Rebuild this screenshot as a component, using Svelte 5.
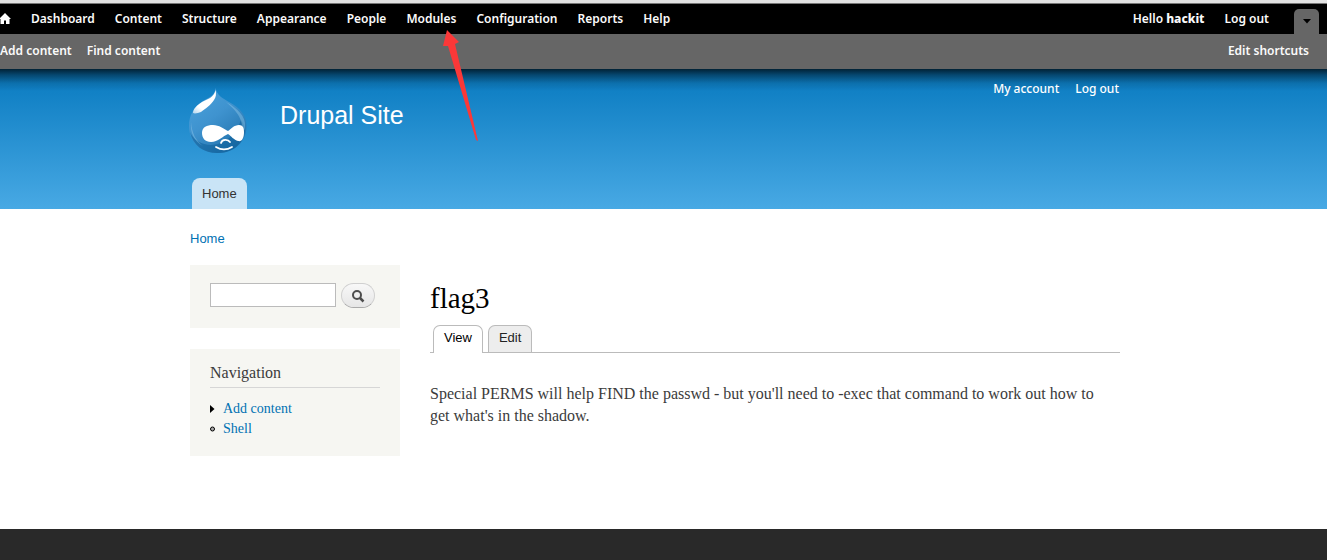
<script>
  const adminLinks = ['Dashboard', 'Content', 'Structure', 'Appearance', 'People', 'Modules', 'Configuration', 'Reports', 'Help'];
</script>

<div class="page">
  <div class="toolbar">
    <nav class="menu" aria-label="Administration">
      <a class="home" href="#home" aria-label="Home">
        <svg width="11" height="11" viewBox="0 0 11 11"><path d="M5 0 L11 6 H9.500 V11 H6 V7.500 H4 V11 H.5 V6 H-1 Z" fill="#fff" /></svg>
      </a>
      {#each adminLinks as label}
        <a href="#{label}">{label}</a>
      {/each}
      <div class="user">
        <a href="#user">Hello <strong>hackit</strong></a>
        <a href="#logout">Log out</a>
        <button class="toggle" type="button" aria-label="Hide shortcuts">
          <svg width="8" height="5" viewBox="0 0 8 5"><path d="M0 0 H8 L4 4.500 Z" fill="#000" /></svg>
        </button>
      </div>
    </nav>
    <nav class="drawer" aria-label="Shortcuts">
      <a href="#add">Add content</a>
      <a href="#find">Find content</a>
      <a class="edit" href="#shortcuts">Edit shortcuts</a>
    </nav>
    <svg class="pointer" width="38" height="112" viewBox="0 0 38 112" aria-hidden="true">
      <path d="M7 0 L19 12 L15 14 L38 111 L36 110 L8 16 L3 16 Z" fill="#fb3838" />
    </svg>
  </div>

  <header>
    <div class="wrap">
      <div class="brand">
        <a class="logo" href="#home" aria-label="Drupal Site home">
          <svg width="58" height="66" viewBox="0 0 58 66">
            <defs>
              <linearGradient id="drop" x1="0" y1="0" x2=".7" y2="1">
                <stop offset="0" stop-color="#4ba3dd" />
                <stop offset=".5" stop-color="#3f93cf" />
                <stop offset="1" stop-color="#2273ad" />
              </linearGradient>
              <linearGradient id="shine" x1="0" y1="1" x2=".7" y2="0">
                <stop offset="0" stop-color="#fff" stop-opacity=".6" />
                <stop offset=".3" stop-color="#fff" />
              </linearGradient>
            </defs>
            <path d="M26.500 0 C28 7 33 10 40 14 C51 20 57.500 27 57.500 38 C57.500 54 45 65 28.500 65 C12 65 0 54 0 38 C0 27 5 19 14 13 C21 9 26 7 26.500 0 Z" fill="url(#drop)" />
            <path d="M1 44 C9 62 40 64 52 32 C54 35 56 38 56 42 C54 57 43 65 28.500 65 C14 65 4 57 1 44 Z" fill="#0a5b96" opacity=".5" />
            <path d="M37 14 C48 20 57 28 56 39 C56 41 55 43 54 44 C53 31 50 25 37 14 Z" fill="#9ccdeb" opacity=".4" />
            <path d="M2 34 C3 46 7 53 14 58 C5 53 1 45 2 34 Z" fill="#9ccdeb" opacity=".4" />
            <path d="M26.500 2 C27.500 6 27 9 25 12 C22 17 16 21 12 24 C9 25 6 26 4 25 C4 21 8 17 13 14 C18 11 25 10 26.500 2 Z" fill="url(#shine)" />
            <path d="M13 45 C13 39 18 37 24 37 C30 37 35 41 39 43 C42 41 45 37 50 37 C54 37 55 40 55 44 C55 50 53 54 49 53 C45 52 42 48 39 46 C34 48 29 54 22 54 C16 54 13 50 13 45 Z" fill="#fff" />
            <path d="M32 55 C33 51 39 51 41 54 M27 59 C32 62 38 62 43 59" fill="none" stroke="#fff" stroke-width="1.800" stroke-linecap="round" />
          </svg>
        </a>
        <a class="site" href="#home">Drupal Site</a>
        <nav class="account" aria-label="Account">
          <a href="#account">My account</a>
          <a href="#logout">Log out</a>
        </nav>
      </div>
      <nav aria-label="Main"><a class="main-tab" href="#home">Home</a></nav>
    </div>
  </header>

  <div class="wrap body">
    <nav class="crumb" aria-label="Breadcrumb"><a href="#home">Home</a></nav>
    <div class="columns">
      <aside>
        <form class="block search" role="search">
          <input type="search" aria-label="Search" />
          <button type="button" aria-label="Search">
            <svg width="14" height="14" viewBox="0 0 14 14" fill="none" stroke="#4d4d4d"><circle cx="6" cy="6" r="4" stroke-width="2" /><path d="M9 9 L12.500 12.500" stroke-width="2.500" /></svg>
          </button>
        </form>
        <section class="block nav">
          <h2>Navigation</h2>
          <ul>
            <li><svg width="5" height="8" viewBox="0 0 5 8"><path d="M0 0 L4.500 4 L0 8 Z" /></svg><a href="#add">Add content</a></li>
            <li><svg width="5" height="6" viewBox="0 0 5 6"><circle cx="2.500" cy="3" r="2" fill="#aaa" stroke="#000" /></svg><a href="#shell">Shell</a></li>
          </ul>
        </section>
      </aside>
      <main>
        <h1>flag3</h1>
        <nav class="tabs" aria-label="Page tabs">
          <a class="active" href="#view">View</a>
          <a href="#edit">Edit</a>
        </nav>
        <p>Special PERMS will help FIND the passwd - but you'll need to -exec that command to work out how to get what's in the shadow.</p>
      </main>
    </div>
  </div>
  <footer></footer>
</div>

<style>
  :global(body) { margin: 0; background: #fff; }
  .page { min-height: 100vh; display: flex; flex-direction: column; font-family: "Liberation Sans", Arial, sans-serif; }
  a { color: #0071b3; text-decoration: none; }
  svg { display: block; }

  .toolbar { position: relative; border-top: 3px solid #e2e2e2; font: 600 12px/20px "Noto Sans", sans-serif; z-index: 1; }
  .toolbar a { color: #fafafa; }
  .menu { display: flex; gap: 20px; min-height: 30px; padding: 0 8px 0 0; border-top: 1px solid #777; background: #000; }
  .menu a { padding: 5px 0; }
  .menu .home { padding: 9px 0; }
  .user { display: flex; gap: 20px; margin-left: auto; }
  .user strong { font-weight: 800; }
  .toggle { width: 25px; margin: 5px 0 0 5px; padding: 0; border: 0; border-radius: 5px 5px 0 0; background: #666; display: grid; place-items: center; }
  .drawer { display: flex; gap: 15px; padding: 7px 18px 8px 0; background: #666; }
  .edit { margin-left: auto; }
  .pointer { position: absolute; left: 440px; top: 27px; }

  header { background: linear-gradient(rgba(0, 0, 0, .72), rgba(0, 0, 0, .42) 6px, rgba(0, 0, 0, .12) 14px, transparent 22px), linear-gradient(#0779bf, #48a9e4); }
  .wrap { box-sizing: border-box; width: 100%; max-width: 979px; margin: 0 auto; padding: 0 33px 0 16px; }
  .brand { display: flex; padding-top: 19px; height: 90px; }
  .logo { margin-left: -1px; }
  .site { margin: 12px 0 0 33px; color: #fff; font-size: 25px; line-height: 30px; }
  .account { display: flex; gap: 16px; margin: -9px 1px 0 auto; font: 500 12px/20px "Noto Sans", sans-serif; }
  .account a { color: #fff; }
  .main-tab { display: inline-block; margin-left: 2px; padding: 0 10px; border-radius: 8px 8px 0 0; background: #c9e4f6; color: #333; font-size: 13px; line-height: 31px; vertical-align: top; }

  .body { flex: 1; padding-bottom: 72px; }
  .crumb { padding: 20px 0 17px; font-size: 13px; line-height: 19px; }
  .columns { display: flex; gap: 30px; }
  aside { width: 210px; flex: none; }
  .block { background: #f6f6f2; margin-bottom: 21px; }
  .search { display: flex; gap: 5px; padding: 18px 20px 20px; }
  .search input { box-sizing: border-box; width: 126px; height: 24px; border: 1px solid #bbb; background: #fff; margin: 0; }
  .search button { width: 34px; height: 25px; padding: 0; border: 1px solid #d0d0d0; border-bottom-color: #aaa; border-radius: 13px; background: linear-gradient(#f8f8f8, #e6e6e6); display: grid; place-items: center; }
  .nav { font: 14px/20px "Liberation Serif", serif; padding: 14px 20px 17px; margin: 0; }
  h2 { margin: 0 0 11px; padding-bottom: 4px; border-bottom: 1px solid #d6d6d6; color: #3b3b3b; font-size: 16px; font-weight: 400; line-height: 20px; }
  ul { list-style: none; margin: 0; padding: 0; }
  li { display: flex; align-items: center; gap: 8px; }
  main { flex: 1; min-width: 0; font-family: "Liberation Serif", serif; }
  h1 { margin: 17px 0 11px; font-size: 29px; line-height: 32px; font-weight: 400; color: #000; }
  .tabs { display: flex; gap: 5px; padding-left: 3px; border-bottom: 1px solid #bbb; font: 13px/24px "Liberation Sans", sans-serif; }
  .tabs a { padding: 0 10px 2px; border: 1px solid #bbb; border-bottom: 0; border-radius: 7px 7px 0 0; background: #ededed; color: #222; }
  .tabs .active { margin-bottom: -1px; padding-bottom: 3px; background: #fff; color: #000; }
  p { margin: 30px 0 0; padding-right: 12px; color: #3b3b3b; font-size: 16px; line-height: 22px; }
  footer { height: 31px; background: #292929; }
</style>
